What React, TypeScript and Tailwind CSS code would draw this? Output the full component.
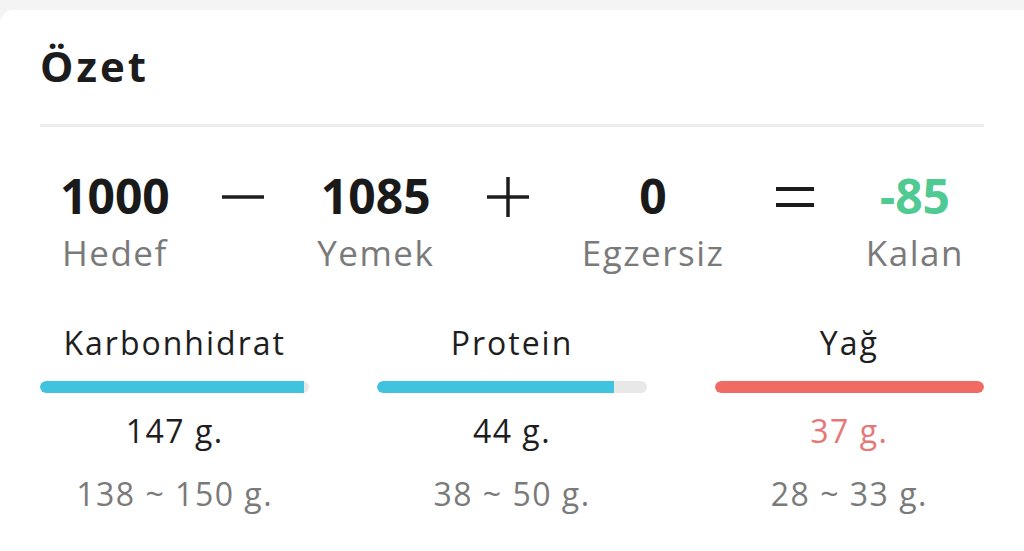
import React from "react";

const font = { fontFamily: '"Open Sans", "Liberation Sans", sans-serif' };

type Stat = { value: string; label: string; green?: boolean };

const Minus = () => (
  <svg width="44" height="44" viewBox="0 0 44 44" className="shrink-0">
    <line x1="1" y1="22" x2="43" y2="22" stroke="#1c1c1c" strokeWidth="3.5" />
  </svg>
);

const Plus = () => (
  <svg width="44" height="44" viewBox="0 0 44 44" className="shrink-0">
    <line x1="1" y1="22" x2="43" y2="22" stroke="#1c1c1c" strokeWidth="3.5" />
    <line x1="22" y1="2" x2="22" y2="42" stroke="#1c1c1c" strokeWidth="3.5" />
  </svg>
);

const Equals = () => (
  <svg width="38" height="44" viewBox="0 0 38 44" className="shrink-0">
    <line x1="0" y1="14" x2="38" y2="14" stroke="#1c1c1c" strokeWidth="4" />
    <line x1="0" y1="30" x2="38" y2="30" stroke="#1c1c1c" strokeWidth="4" />
  </svg>
);

const StatItem = ({ value, label, green }: Stat) => (
  <div className="flex flex-col items-center">
    <span
      className={`text-[48px] leading-[48px] font-bold ${
        green ? "text-[#4fca92]" : "text-[#1a1a1a]"
      }`}
    >
      {value}
    </span>
    <span className="mt-[15px] text-[35px] leading-[35px] tracking-[1.5px] text-[#7a7a7a]">
      {label}
    </span>
  </div>
);

type Macro = {
  name: string;
  value: number;
  min: number;
  max: number;
};

const macros: Macro[] = [
  { name: "Karbonhidrat", value: 147, min: 138, max: 150 },
  { name: "Protein", value: 44, min: 38, max: 50 },
  { name: "Yağ", value: 37, min: 28, max: 33 },
];

const MacroItem = ({ name, value, min, max }: Macro) => {
  const over = value > max;
  const pct = Math.min(100, (value / max) * 100);

  return (
    <div className="flex flex-col items-center">
      <span className="text-[32px] leading-[32px] tracking-[2px] text-[#1e1e1e]">
        {name}
      </span>
      <div className="mt-[22px] h-3 w-full rounded-full bg-[#e8e8e8] overflow-hidden">
        <div
          className={`h-full ${
            over ? "bg-[#f26a64] rounded-full" : "bg-[#3fc3df] rounded-l-full"
          }`}
          style={{ width: `${pct}%` }}
        />
      </div>
      <span
        className={`mt-[22px] text-[32px] leading-[32px] tracking-[1.5px] ${
          over ? "text-[#e67777]" : "text-[#1e1e1e]"
        }`}
      >
        {value} g.
      </span>
      <span className="mt-[31px] text-[32px] leading-[32px] tracking-[1.5px] text-[#7a7a7a]">
        {min} ~ {max} g.
      </span>
    </div>
  );
};

export default function App() {
  return (
    <div className="h-[551px] bg-[#f4f4f4] pt-[10px] overflow-hidden" style={font}>
      <div className="h-full bg-white rounded-tl-[14px] px-10 pt-[35px]">
        <h2 className="text-[42px] leading-[42px] font-bold tracking-[3px] text-[#1c1c1c]">
          Özet
        </h2>
        <div className="mt-[37px] h-[3px] bg-[#ececec]" />

        <div className="mt-[45px] px-5 flex justify-between items-start">
          <StatItem value="1000" label="Hedef" />
          <div className="pt-[3px]"><Minus /></div>
          <StatItem value="1085" label="Yemek" />
          <div className="pt-[3px]"><Plus /></div>
          <StatItem value="0" label="Egzersiz" />
          <div className="pt-[3px]"><Equals /></div>
          <StatItem value="-85" label="Kalan" green />
        </div>

        <div className="mt-[57px] grid grid-cols-3 gap-[68px]">
          {macros.map((m) => (
            <MacroItem key={m.name} {...m} />
          ))}
        </div>
      </div>
    </div>
  );
}
